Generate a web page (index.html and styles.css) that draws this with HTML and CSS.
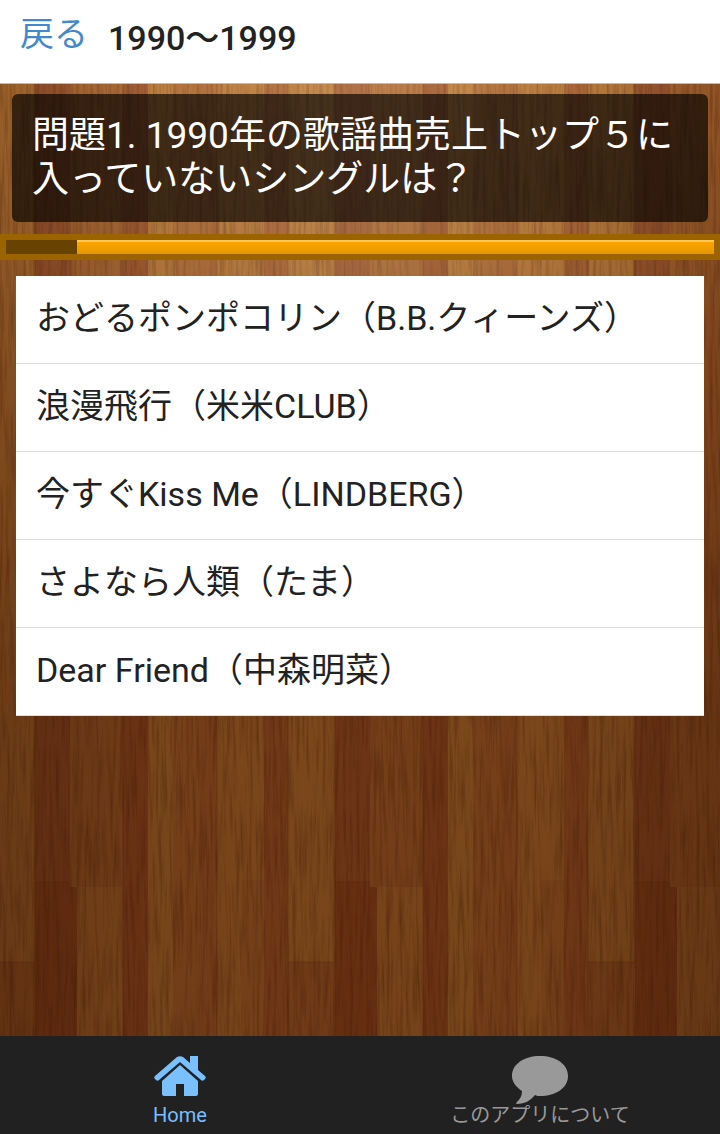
FILE: index.html
```html
<!DOCTYPE html>
<html lang="ja">
<head>
  <meta charset="UTF-8">
  <meta name="viewport" content="width=device-width, initial-scale=1">
  <title>1990～1999</title>
  <link rel="stylesheet" href="styles.css">
</head>
<body>

  <header>
    <a class="back" href="#back">戻る</a>
    <h1>1990～1999</h1>
  </header>

  <main>
    <!-- wood floor, one tile is 300px wide -->
    <svg class="wood" width="100%" height="100%" aria-hidden="true">
      <defs>
        <pattern id="planks" x="35" y="0" width="300" height="1000" patternUnits="userSpaceOnUse">
          <rect width="300" height="1000" fill="#b36d30"/>
          <rect x="0" width="35" height="1000" fill="#a0562a"/>
          <rect x="0" y="798" width="35" height="202" fill="#984d22"/>
          <rect x="35" width="53" height="1000" fill="#ae682e"/>
          <rect x="35" y="803" width="7" height="197" fill="#984d22"/>
          <rect x="42" y="803" width="46" height="197" fill="#b87532"/>
          <rect x="88" width="25" height="1000" fill="#a05427"/>
          <rect x="113" width="25" height="1000" fill="#bb7a34"/>
          <rect x="138" width="26" height="1000" fill="#b06a2f"/>
          <rect x="164" width="18" height="1000" fill="#ad652d"/>
          <rect x="182" width="47" height="1000" fill="#ba7733"/>
          <rect x="206" y="796" width="23" height="204" fill="#b36e30"/>
          <rect x="229" width="24" height="1000" fill="#a95f2b"/>
          <rect x="253" width="46" height="1000" fill="#bb7934"/>
          <rect x="253" y="878" width="46" height="122" fill="#ab652d"/>
          <path d="M0 0v1000M88 0v1000M182 0v1000M253 0v1000M299 0v1000" stroke="#5a2408" stroke-opacity="0.35"/>
          <path d="M0 798h35M253 878h46" stroke="#5a2408" stroke-opacity="0.3"/>
        </pattern>
        <filter id="grain" x="0" y="0" width="100%" height="100%" color-interpolation-filters="sRGB">
          <feTurbulence type="fractalNoise" baseFrequency="0.3 0.015" numOctaves="3" seed="7"/>
          <feColorMatrix values="0 0 0 0 0.3  0 0 0 0 0.1  0 0 0 0 0.01  0.9 0 0 0 -0.38"/>
        </filter>
        <!-- light falls from the top of the floor and fades downwards -->
        <radialGradient id="light" cx="0.5" cy="0.05" r="0.55">
          <stop offset="0" stop-color="#ffdcb0" stop-opacity="0.26"/>
          <stop offset="1" stop-color="#ffdcb0" stop-opacity="0"/>
        </radialGradient>
        <linearGradient id="fade" x1="0" y1="0" x2="0" y2="1">
          <stop offset="0" stop-color="#321000" stop-opacity="0.05"/>
          <stop offset="0.3" stop-color="#321000" stop-opacity="0.25"/>
          <stop offset="0.65" stop-color="#321000" stop-opacity="0.47"/>
          <stop offset="1" stop-color="#321000" stop-opacity="0.5"/>
        </linearGradient>
        <linearGradient id="sides">
          <stop offset="0" stop-color="#321000" stop-opacity="0.22"/>
          <stop offset="0.25" stop-color="#321000" stop-opacity="0"/>
          <stop offset="0.75" stop-color="#321000" stop-opacity="0"/>
          <stop offset="1" stop-color="#321000" stop-opacity="0.22"/>
        </linearGradient>
      </defs>
      <rect width="100%" height="100%" fill="url(#planks)"/>
      <rect width="100%" height="100%" filter="url(#grain)"/>
      <rect width="100%" height="100%" fill="url(#fade)"/>
      <rect width="100%" height="100%" fill="url(#sides)"/>
      <rect width="100%" height="100%" fill="url(#light)"/>
    </svg>

    <h2 class="question">問題1. 1990年の歌謡曲売上トップ５に入っていないシングルは？</h2>

    <div class="timer" role="progressbar" aria-label="残り時間" aria-valuenow="90" aria-valuemin="0" aria-valuemax="100">
      <div class="track"><div class="bar" style="width: 90%"></div></div>
    </div>

    <ul class="answers">
      <li><button type="button">おどるポンポコリン（B.B.クィーンズ）</button></li>
      <li><button type="button">浪漫飛行（米米CLUB）</button></li>
      <li><button type="button">今すぐKiss Me（LINDBERG）</button></li>
      <li><button type="button">さよなら人類（たま）</button></li>
      <li><button type="button">Dear Friend（中森明菜）</button></li>
    </ul>
  </main>

  <nav>
    <a class="active" href="#home">
      <svg width="52" height="40" viewBox="0 0 52 40" aria-hidden="true">
        <path d="M36 7V0h8v14l7 6c1 1 1 2 0 3l-1 1c-1 1-2 1-3 0L26 6 5 24c-1 1-2 1-3 0l-1-1c-1-1-1-2 0-3L23 1c2-1 4-1 6 0z"/>
        <path d="M8 25 26 9l18 16v13c0 1-1 2-2 2H30V28h-8v12H10c-1 0-2-1-2-2z"/>
      </svg>
      <span>Home</span>
    </a>
    <a href="#about">
      <svg width="56" height="48" viewBox="0 0 56 48" aria-hidden="true">
        <path d="M28 0c16 0 28 8 28 20S44 40 28 40c-2 0-3 0-5-1-4 5-10 9-18 9-1 0-1-2 0-2 3-3 5-6 5-11C4 31 0 26 0 20 0 8 12 0 28 0z"/>
      </svg>
      <span>このアプリについて</span>
    </a>
  </nav>

</body>
</html>
```
FILE: styles.css
```css
* {
  box-sizing: border-box;
}
body {
  margin: 0;
  min-height: 100vh;
  display: flex;
  flex-direction: column;
  font-family: Roboto, "Noto Sans CJK JP", sans-serif;
  color: #222;
}
header {
  display: flex;
  align-items: flex-start;
  gap: 20px;
  height: 84px;
  padding: 12px 20px;
  background: #fff;
  border-bottom: 1px solid #bbb;
}
.back {
  color: #4488cc;
  font-size: 34px;
  line-height: 44px;
  text-decoration: none;
}
h1 {
  margin: 0;
  font-size: 34px;
  font-weight: 500;
  line-height: 52px;
}
main {
  position: relative;
  flex: 1;
  padding-top: 10px;
  overflow: hidden;
  isolation: isolate;
}
.wood {
  position: absolute;
  inset: 0;
  z-index: -1;
}
.question {
  margin: 0 12px 12px;
  padding: 20px;
  border-radius: 6px;
  background: rgba(0, 0, 0, 0.65);
  color: #fff;
  font-size: 37px;
  font-weight: 400;
  line-height: 44px;
}
.timer {
  padding: 6px;
  background: #9c6400;
}
.track {
  display: flex;
  justify-content: flex-end;
  height: 14px;
  background: #664400;
}
.bar {
  border-top: 2px solid #ffc85a;
  background: linear-gradient(#ffa500, #e39700);
}
.answers {
  margin: 16px;
  padding: 0;
  list-style: none;
  background: #fff;
}
.answers li {
  height: 88px;
  border-bottom: 1px solid #ddd;
}
.answers button {
  width: 100%;
  height: 100%;
  padding: 0 20px 8px;
  border: 0;
  background: none;
  color: #222;
  font-family: inherit;
  font-size: 34px;
  text-align: left;
  cursor: pointer;
}
nav {
  display: flex;
  height: 98px;
  background: #212121;
}
nav a {
  flex: 1;
  display: flex;
  flex-direction: column;
  align-items: center;
  justify-content: space-between;
  padding: 20px 0 8px;
  color: #999;
  font-size: 20px;
  line-height: 22px;
  text-decoration: none;
}
nav svg {
  flex: none;
  fill: currentColor;
}
nav .active {
  color: #7abfff;
}
```
